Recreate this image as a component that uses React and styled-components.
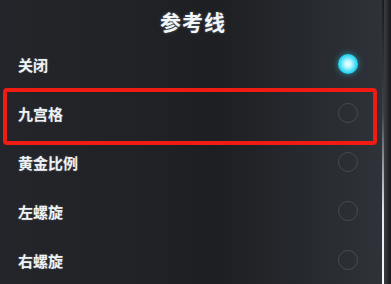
import React, { useState } from "react";
import styled, { createGlobalStyle } from "styled-components";

const options = ["关闭", "九宫格", "黄金比例", "左螺旋", "右螺旋"];

const App = () => {
  const [selected, setSelected] = useState(0);

  return (
    <>
      <GlobalStyle />
      <Screen>
        <Panel>
          <Title>参考线</Title>
          <List>
            {options.map((label, i) => (
              <Row key={label} onClick={() => setSelected(i)}>
                <Label>{label}</Label>
                <Radio $checked={selected === i} />
                {i === 1 && <Highlight />}
              </Row>
            ))}
          </List>
        </Panel>
        <Edge />
      </Screen>
    </>
  );
};

const GlobalStyle = createGlobalStyle`
  html, body {
    margin: 0;
    padding: 0;
    background: #1f2125;
  }
  * {
    box-sizing: border-box;
  }
`;

const Screen = styled("div")`
  display: flex;
  width: 391px;
  height: 284px;
  overflow: hidden;
  font-family: "Noto Sans CJK SC", "Noto Sans", sans-serif;
  background: linear-gradient(90deg, #23252a 0%, #202226 35%, #1d1f22 55%, #272a2f 80%, #30343a 100%);
`;

const Panel = styled("div")`
  flex: 1;
  display: flex;
  flex-direction: column;
`;

const Title = styled("div")`
  height: 40px;
  display: flex;
  align-items: center;
  justify-content: center;
  padding-left: 4px;
  padding-top: 2px;
  color: #f2f6f8;
  font-size: 21px;
  font-weight: 700;
  letter-spacing: 1px;
  text-shadow: 0 0 3px rgba(200, 230, 255, 0.35);
`;

const List = styled("div")`
  display: flex;
  flex-direction: column;
`;

const Row = styled("div")`
  position: relative;
  height: 49px;
  display: flex;
  align-items: center;
  justify-content: space-between;
  padding: 1px 24px 0 18px;
  cursor: pointer;
`;

const Label = styled("span")`
  color: #eef2f4;
  font-size: 15px;
  font-weight: 700;
  text-shadow: 0 0 2px rgba(220, 235, 255, 0.3);
`;

const Radio = styled("span")`
  width: 20px;
  height: 20px;
  border-radius: 50%;
  border: ${({ $checked }) => ($checked ? "none" : "1.5px solid #464a51")};
  background: ${({ $checked }) =>
    $checked
      ? "radial-gradient(circle, #f2ffff 0%, #b8f6ff 25%, #2fd8f2 60%, #1fc4e4 100%)"
      : "transparent"};
  box-shadow: ${({ $checked }) =>
    $checked ? "0 0 6px rgba(40, 210, 240, 0.6)" : "none"};
`;

const Highlight = styled("span")`
  position: absolute;
  top: 0;
  bottom: -8px;
  left: 3px;
  right: 5px;
  border: 4.5px solid #f01c14;
  border-radius: 4px;
  pointer-events: none;
`;

const Edge = styled("div")`
  width: 9px;
  border-left: 2px solid transparent;
  border-image: linear-gradient(180deg, rgba(120, 130, 140, 0) 0%, rgba(150, 160, 175, 0.3) 40%, #dfe8f2 75%, #f4f8ff 100%) 1;
  background: linear-gradient(90deg, #3a3e44 0%, #15171a 100%);
`;

export default App;
